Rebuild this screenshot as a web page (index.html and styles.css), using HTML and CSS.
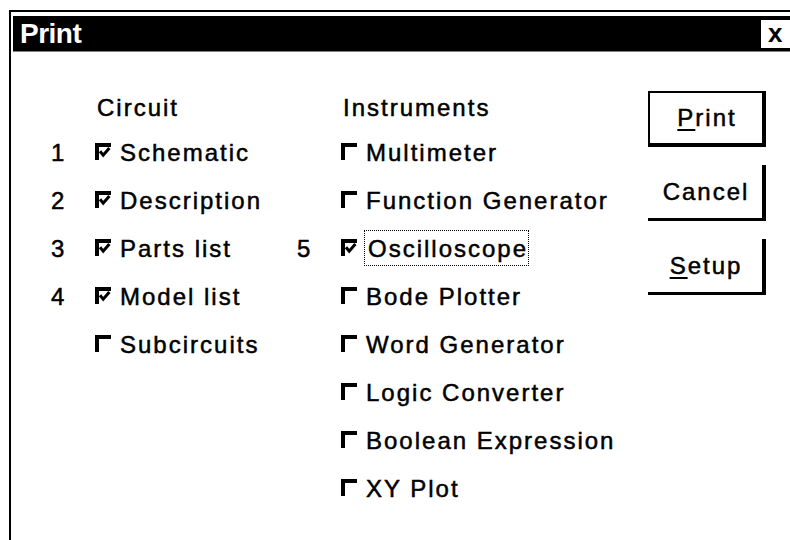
FILE: index.html
```html
<!DOCTYPE html>
<html>
<head>
<meta charset="utf-8">
<title>Print</title>
<link rel="stylesheet" href="styles.css">
</head>
<body>
<div class="window">
  <div class="titlebar">
    <span class="title">Print</span>
    <span class="close">x</span>
  </div>
  <div class="content">
    <section class="group group-circuit">
      <div class="heading">Circuit</div>
      <div class="row"><span class="num">1</span><span class="item"><svg class="cb" width="16" height="17" viewBox="0 0 16 17"><path class="frame" d="M0 0H16V3.5H3.5V17H0Z"/><path class="tick" d="M5 8.2L8.2 12.2L14.4 5"/></svg>Schematic</span></div>
      <div class="row"><span class="num">2</span><span class="item"><svg class="cb" width="16" height="17" viewBox="0 0 16 17"><path class="frame" d="M0 0H16V3.5H3.5V17H0Z"/><path class="tick" d="M5 8.2L8.2 12.2L14.4 5"/></svg>Description</span></div>
      <div class="row"><span class="num">3</span><span class="item"><svg class="cb" width="16" height="17" viewBox="0 0 16 17"><path class="frame" d="M0 0H16V3.5H3.5V17H0Z"/><path class="tick" d="M5 8.2L8.2 12.2L14.4 5"/></svg>Parts list</span></div>
      <div class="row"><span class="num">4</span><span class="item"><svg class="cb" width="16" height="17" viewBox="0 0 16 17"><path class="frame" d="M0 0H16V3.5H3.5V17H0Z"/><path class="tick" d="M5 8.2L8.2 12.2L14.4 5"/></svg>Model list</span></div>
      <div class="row"><span class="num"></span><span class="item"><svg class="cb" width="16" height="17" viewBox="0 0 16 17"><path class="frame" d="M0 0H16V3.5H3.5V17H0Z"/></svg>Subcircuits</span></div>
    </section>
    <section class="group group-instr">
      <div class="heading">Instruments</div>
      <div class="row"><span class="num"></span><span class="item"><svg class="cb" width="16" height="17" viewBox="0 0 16 17"><path class="frame" d="M0 0H16V3.5H3.5V17H0Z"/></svg>Multimeter</span></div>
      <div class="row"><span class="num"></span><span class="item"><svg class="cb" width="16" height="17" viewBox="0 0 16 17"><path class="frame" d="M0 0H16V3.5H3.5V17H0Z"/></svg>Function Generator</span></div>
      <div class="row"><span class="num">5</span><span class="item"><svg class="cb" width="16" height="17" viewBox="0 0 16 17"><path class="frame" d="M0 0H16V3.5H3.5V17H0Z"/><path class="tick" d="M5 8.2L8.2 12.2L14.4 5"/></svg><span class="focus">Oscilloscope</span></span></div>
      <div class="row"><span class="num"></span><span class="item"><svg class="cb" width="16" height="17" viewBox="0 0 16 17"><path class="frame" d="M0 0H16V3.5H3.5V17H0Z"/></svg>Bode Plotter</span></div>
      <div class="row"><span class="num"></span><span class="item"><svg class="cb" width="16" height="17" viewBox="0 0 16 17"><path class="frame" d="M0 0H16V3.5H3.5V17H0Z"/></svg>Word Generator</span></div>
      <div class="row"><span class="num"></span><span class="item"><svg class="cb" width="16" height="17" viewBox="0 0 16 17"><path class="frame" d="M0 0H16V3.5H3.5V17H0Z"/></svg>Logic Converter</span></div>
      <div class="row"><span class="num"></span><span class="item"><svg class="cb" width="16" height="17" viewBox="0 0 16 17"><path class="frame" d="M0 0H16V3.5H3.5V17H0Z"/></svg>Boolean Expression</span></div>
      <div class="row"><span class="num"></span><span class="item"><svg class="cb" width="16" height="17" viewBox="0 0 16 17"><path class="frame" d="M0 0H16V3.5H3.5V17H0Z"/></svg>XY Plot</span></div>
    </section>
    <div class="buttons">
      <div class="btn btn-default"><u>P</u>rint</div>
      <div class="btn">Cancel</div>
      <div class="btn"><u>S</u>etup</div>
    </div>
  </div>
</div>
</body>
</html>
```

FILE: styles.css
```css
html, body {
  margin: 0;
  padding: 0;
  background: #fff;
  overflow: hidden;
}

body {
  font-family: "Liberation Sans", Arial, sans-serif;
  color: #000;
}

.window {
  margin: 10px 0 0 9px;
  width: 779px;
  height: 524px;
  border-top: 2px solid #000;
  border-left: 2px solid #000;
  padding: 4px 0 0 2px;
}

.titlebar {
  display: flex;
  height: 35px;
  background: #000;
  border-bottom: 1px solid #808080;
}

.title {
  color: #fff;
  font-weight: bold;
  font-size: 28px;
  line-height: 35px;
  letter-spacing: -0.5px;
  padding-left: 7px;
}

.close {
  margin-left: auto;
  margin-top: 4px;
  width: 31px;
  height: 28px;
  box-sizing: border-box;
  padding-left: 7px;
  background: #fff;
  color: #000;
  font-weight: bold;
  font-size: 26px;
  line-height: 27px;
}

.content {
  display: flex;
  padding-top: 35px;
  font-size: 24px;
  letter-spacing: 2px;
  -webkit-text-stroke: 0.5px #000;
}

.group-circuit {
  width: 246px;
  margin-left: 38px;
}

.group-instr {
  width: 351px;
}

.heading {
  line-height: 42px;
  padding-left: 46px;
}

.row {
  display: flex;
  line-height: 48px;
  height: 48px;
}

.num {
  width: 44px;
  flex: none;
}

.item {
  white-space: nowrap;
}

.cb {
  width: 16px;
  height: 17px;
  margin-right: 9px;
  vertical-align: 1px;
  overflow: visible;
}

.cb .frame {
  fill: #000;
  shape-rendering: crispEdges;
}

.cb .tick {
  fill: none;
  stroke: #000;
  stroke-width: 3;
}

.focus {
  display: inline-block;
  margin-left: -2px;
  line-height: 28px;
  padding: 4px 0 2px 3px;
  border: 1px dotted #000;
}

.buttons {
  width: 118px;
  display: flex;
  flex-direction: column;
  gap: 18px;
  padding-top: 4px;
}

.btn {
  height: 56px;
  box-sizing: border-box;
  display: flex;
  align-items: center;
  justify-content: center;
  padding-left: 2px;
  border-right: 4px solid #000;
  border-bottom: 3px solid #000;
}

.btn-default {
  border-top: 2px solid #000;
  border-left: 2px solid #000;
  border-bottom-width: 4px;
}

.btn u {
  text-decoration-thickness: 2px;
  text-underline-offset: 3px;
}
```
